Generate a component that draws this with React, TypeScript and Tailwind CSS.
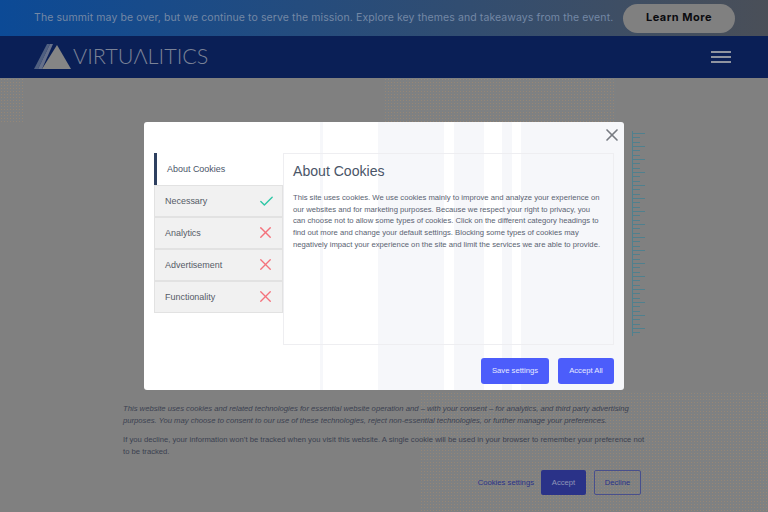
import React from 'react';
import { X, Check } from 'lucide-react';

const categories = [
  { name: 'Necessary', on: true },
  { name: 'Analytics', on: false },
  { name: 'Advertisement', on: false },
  { name: 'Functionality', on: false },
];

// ruler ticks peeking out behind the modal
const Ruler = () => (
  <svg width="14" height="206" className="absolute left-[632px] top-[131px]">
    <line x1="0.5" y1="0" x2="0.5" y2="205" stroke="#50808e" strokeWidth="1" />
    {Array.from({ length: 47 }).map((_, i) => (
      <line
        key={i}
        x1="0"
        x2={i % 3 === 0 ? 13 : 8}
        y1={Math.round(2 + i * 4.33) + 0.5}
        y2={Math.round(2 + i * 4.33) + 0.5}
        stroke="#50808e"
        strokeWidth="1"
      />
    ))}
  </svg>
);

// dithered patches of the page behind the dim layer
const Dither = ({ className }: { className: string }) => (
  <div className={`absolute bg-[radial-gradient(#a98f72_0.6px,transparent_0.7px),radial-gradient(#77899c_0.6px,transparent_0.7px)] bg-[length:3px_3px] bg-[position:0_0,1.5px_1.5px] opacity-50 ${className}`} />
);

const CookieModal = () => (
  <div className="absolute left-[144px] top-[122px] h-[268px] w-[480px] rounded-[3px] bg-[linear-gradient(90deg,#ffffff_0,#ffffff_176px,#f6f7fa_176px,#f6f7fa_179px,#ffffff_179px,#ffffff_234px,#f6f7fa_234px,#f6f7fa_300px,#ffffff_300px,#ffffff_310px,#f6f7fa_310px,#f6f7fa_340px,#ffffff_340px,#ffffff_358px,#f6f7fa_358px,#f6f7fa_368px,#ffffff_368px,#ffffff_377px,#f6f7fa_377px,#f6f7fa_480px)] px-[10px] pt-[31px] font-['Liberation_Sans',sans-serif]">
    <button className="absolute right-[2px] top-[3px] text-[#777b82]">
      <X size={20} strokeWidth={2} />
    </button>
    <div className="flex h-[192px]">
      <div className="w-[129px] shrink-0">
        <div className="flex h-[32px] items-center border-l-[3px] border-[#2e4060] pl-[10px] pt-[2px] text-[8.96px] text-[#4a5568]">
          About Cookies
        </div>
        {categories.map((c) => (
          <div key={c.name} className="flex h-[32px] items-center justify-between border border-[#e2e2e2] bg-[#f1f1f1] pl-[10px] pr-[7px] text-[8.96px] text-[#555b66]">
            <span className="pt-[2px]">{c.name}</span>
            {c.on ? (
              <Check size={17} strokeWidth={2} className="text-[#2ec7a6]" />
            ) : (
              <X size={19} strokeWidth={1.7} className="-mt-[1px] text-[#f4727c]" />
            )}
          </div>
        ))}
      </div>
      <div className="flex-1 border border-[#eeeef1] pl-[9px] pr-[10px] pt-[8px]">
        <h2 className="text-[14.08px] leading-[18px] text-[#4a5568]">About Cookies</h2>
        <p className="mt-[12px] text-[7.68px] leading-[11.7px] text-[#5a6372]">
          This site uses cookies. We use cookies mainly to improve and analyze your experience on our websites and for marketing purposes. Because we respect your right to privacy, you can choose not to allow some types of cookies. Click on the different category headings to find out more and change your default settings. Blocking some types of cookies may negatively impact your experience on the site and limit the services we are able to provide.
        </p>
      </div>
    </div>
    <div className="mt-[13px] flex justify-end gap-[9px] text-[7.68px] text-[#e6e9ff]">
      <button className="h-[26px] w-[68px] rounded-[3px] bg-[#4c5dfb]">Save settings</button>
      <button className="h-[26px] w-[56px] rounded-[3px] bg-[#4c5dfb]">Accept All</button>
    </div>
  </div>
);

export default function App() {
  return (
    <div className="relative flex h-[512px] w-[768px] flex-col overflow-hidden bg-[#808080] font-['Liberation_Sans',sans-serif]">
      {/* Promo bar */}
      <div className="flex h-[36px] items-center justify-between bg-[linear-gradient(90deg,#0c4a96,#4a4f58)] pl-[34px] pr-[33px]">
        <p className="mb-[1px] font-['Inter',sans-serif] text-[10.5px] tracking-[0.1px] text-[#7488a5]">
          The summit may be over, but we continue to serve the mission. Explore key themes and takeaways from the event.
        </p>
        <button className="h-[29px] w-[112px] rounded-full bg-[#808080] pb-[2px] font-['Inter',sans-serif] text-[11px] font-bold tracking-[0.5px] text-[#0b0b0f]">
          Learn More
        </button>
      </div>

      {/* Nav */}
      <div className="flex h-[42px] items-center justify-between bg-[#0a1f56] pl-[34px] pr-[37px]">
        <div className="flex items-center gap-[1px]">
          <svg width="38" height="26" viewBox="0 0 38 26">
            <polygon points="0,25 13,0 16,0 4,25" fill="#4f5f80" />
            <polygon points="4,25 16,0 19,0 8,25" fill="#66708a" />
            <polygon points="8,25 23,1 37,25" fill="#858585" />
          </svg>
          <span className="font-['Lato',sans-serif] text-[21.6px] font-light leading-none text-[#7a8296]">VIRTUΛLITICS</span>
        </div>
        <div className="flex w-[20px] flex-col gap-[3px]">
          <div className="h-[2px] bg-[#8f94a0]" />
          <div className="h-[2px] bg-[#8f94a0]" />
          <div className="h-[2px] bg-[#8f94a0]" />
        </div>
      </div>

      <Dither className="left-[384px] top-[78px] h-[44px] w-[232px]" />
      <Dither className="left-[0px] top-[78px] h-[44px] w-[24px]" />
      <Dither className="left-[420px] top-[392px] h-[120px] w-[348px]" />

      {/* Cookie banner */}
      <div className="relative mt-auto pb-[17px] pl-[123px] pr-[123px] text-[7.68px] leading-[12px] text-[#3b4050]">
        <p className="italic">
          This website uses cookies and related technologies for essential website operation and – with your consent – for analytics, and third party advertising purposes. You may choose to consent to our use of these technologies, reject non-essential technologies, or further manage your preferences.
        </p>
        <p className="mt-[7px]">
          If you decline, your information won’t be tracked when you visit this website. A single cookie will be used in your browser to remember your preference not to be tracked.
        </p>
        <div className="mt-[12px] mr-[4px] flex items-center justify-end">
          <span className="text-[#2a3288]">Cookies settings</span>
          <button className="ml-[7px] h-[25px] w-[45px] rounded-[2px] bg-[#2a3288] text-[#8f94b8]">Accept</button>
          <button className="ml-[8px] h-[25px] w-[47px] rounded-[2px] border border-[#484f8c] text-[#2a3288]">Decline</button>
        </div>
      </div>

      <Ruler />
      <CookieModal />
    </div>
  );
}
